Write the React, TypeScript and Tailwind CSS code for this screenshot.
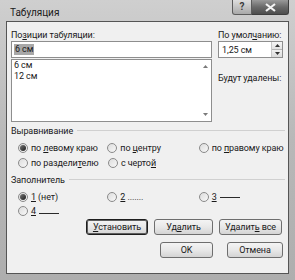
import React from "react";

const U = ({ children }: { children: React.ReactNode }) => (
  <span className="underline underline-offset-[1px]">{children}</span>
);

function Radio({ checked = false }: { checked?: boolean }) {
  return (
    <span className="relative inline-flex w-[10px] h-[10px] shrink-0 rounded-full border border-[#8a8a8a] bg-gradient-to-br from-[#dcdcdc] to-[#f8f8f8] items-center justify-center">
      {checked && (
        <span className="w-[6px] h-[6px] rounded-full bg-gradient-to-br from-[#7a7a7a] to-[#1e1e1e]" />
      )}
    </span>
  );
}

function RadioItem({
  checked,
  children,
  w,
}: {
  checked?: boolean;
  children: React.ReactNode;
  w: string;
}) {
  return (
    <div className={`flex items-center gap-[3px] ${w}`}>
      <Radio checked={checked} />
      <span className="whitespace-nowrap">{children}</span>
    </div>
  );
}

function Btn({
  children,
  w,
  def = false,
}: {
  children: React.ReactNode;
  w: string;
  def?: boolean;
}) {
  return (
    <div
      className={`${w} h-[16px] rounded-[3px] border ${
        def ? "border-[#1e1e1e] shadow-[inset_0_0_0_1px_#5e5e5e]" : "border-[#6e6e6e]"
      } bg-gradient-to-b from-[#f4f4f4] via-[#e8e8e8] to-[#d4d4d4] flex items-center justify-center whitespace-nowrap`}
    >
      {children}
    </div>
  );
}

export default function App() {
  return (
    <div
      className="w-[295px] h-[280px] overflow-hidden bg-gradient-to-b from-[#cfcfcf] via-[#b8b8b8] to-[#aeaeae] text-[9px] leading-[12px] tracking-[-0.1px] text-[#1a1a1a]"
      style={{ fontFamily: 'Roboto, "Noto Sans", sans-serif' }}
    >
      {/* Title bar */}
      <div className="h-[21px] flex items-start">
        <span className="pl-[10px] pt-[6px] text-[10px] leading-[13px] tracking-normal text-[#1a1a1a]">
          Табуляция
        </span>
        <div className="ml-auto mr-[6px] flex h-[15px]">
          <div className="w-[20px] h-[15px] rounded-bl-[3px] border border-[#5c5c5c] border-t-0 bg-gradient-to-b from-[#dedede] to-[#a9a9a9] flex items-center justify-center text-[10px] font-bold text-[#3a3a3a]">
            ?
          </div>
          <div className="w-[37px] h-[15px] rounded-br-[3px] border border-l-0 border-[#3e3e3e] border-t-0 bg-gradient-to-b from-[#9a9a9a] via-[#6a6a6a] to-[#4e4e4e] flex items-center justify-center">
            <svg width="11" height="9" viewBox="0 0 11 9">
              <path d="M1 1 L10 8 M10 1 L1 8" stroke="#f4f4f4" strokeWidth="2.2" />
            </svg>
          </div>
        </div>
      </div>

      {/* Client area */}
      <div className="mx-[6px] h-[253px] border border-[#555] bg-[#f0f0f0] flex flex-col">
        {/* Top section */}
        <div className="flex pl-[4px] pt-[6px]">
          <div className="w-[201px] flex flex-col">
            <div className="h-[13px] flex items-center">
              <span>
                По<U>з</U>иции табуляции:
              </span>
            </div>
            <div className="h-[17px] border border-[#8e8e8e] bg-white flex items-center pl-[2px]">
              <span className="bg-[#a8a8a8] px-[1px] leading-[11px]">6 см</span>
            </div>
            <div className="mt-[1px] h-[63px] border border-[#8e8e8e] bg-white flex">
              <div className="flex-1 pl-[2px] leading-[11px]">
                <div>6 см</div>
                <div>12 см</div>
              </div>
              <div className="w-[12px] flex flex-col justify-between items-center py-[5px]">
                <svg width="5" height="3" viewBox="0 0 5 3">
                  <path d="M0 3 L2.5 0 L5 3 Z" fill="#7a7a7a" />
                </svg>
                <svg width="5" height="3" viewBox="0 0 5 3">
                  <path d="M0 0 L2.5 3 L5 0 Z" fill="#7a7a7a" />
                </svg>
              </div>
            </div>
          </div>
          <div className="ml-[6px] w-[65px] flex flex-col">
            <div className="h-[13px] flex items-center whitespace-nowrap">
              <span>
                По умол<U>ч</U>анию:
              </span>
            </div>
            <div className="h-[17px] border border-[#8e8e8e] bg-white flex items-center">
              <span className="flex-1 pl-[3px]">1,25 см</span>
              <div className="w-[11px] h-full flex flex-col border-l border-[#c8c8c8]">
                <div className="flex-1 flex items-center justify-center bg-gradient-to-b from-[#f6f6f6] to-[#e2e2e2] border-b border-[#b4b4b4]">
                  <svg width="5" height="3" viewBox="0 0 5 3">
                    <path d="M0 3 L2.5 0 L5 3 Z" fill="#333" />
                  </svg>
                </div>
                <div className="flex-1 flex items-center justify-center bg-gradient-to-b from-[#f0f0f0] to-[#dcdcdc]">
                  <svg width="5" height="3" viewBox="0 0 5 3">
                    <path d="M0 0 L2.5 3 L5 0 Z" fill="#333" />
                  </svg>
                </div>
              </div>
            </div>
            <div className="mt-[13px] h-[13px] flex items-center whitespace-nowrap">
              Будут удалены:
            </div>
          </div>
        </div>

        {/* Alignment group */}
        <div className="mt-[2px] pl-[4px] pr-[3px] h-[13px] flex items-center">
          <span>Выравнивание</span>
          <div className="ml-[4px] flex-1 h-px bg-[#d0d0d0]" />
        </div>
        <div className="pl-[11px] mt-[3px] flex flex-col">
          <div className="h-[15px] flex items-center">
            <RadioItem checked w="w-[90px]">
              по <U>л</U>евому краю
            </RadioItem>
            <RadioItem w="w-[92px]">
              по <U>ц</U>ентру
            </RadioItem>
            <RadioItem w="w-[90px]">
              по <U>п</U>равому краю
            </RadioItem>
          </div>
          <div className="h-[15px] flex items-center">
            <RadioItem w="w-[90px]">
              по раздели<U>т</U>елю
            </RadioItem>
            <RadioItem w="w-[92px]">
              с черто<U>й</U>
            </RadioItem>
          </div>
        </div>

        {/* Leader group */}
        <div className="mt-[3px] pl-[4px] pr-[3px] h-[13px] flex items-center">
          <span>Заполнитель</span>
          <div className="ml-[4px] flex-1 h-px bg-[#d0d0d0]" />
        </div>
        <div className="pl-[11px] mt-[3px] flex flex-col">
          <div className="h-[15px] flex items-center">
            <RadioItem checked w="w-[90px]">
              <U>1</U> (нет)
            </RadioItem>
            <RadioItem w="w-[92px]">
              <U>2</U> .......
            </RadioItem>
            <RadioItem w="w-[90px]">
              <U>3</U>
              <span className="inline-block align-middle ml-[3px] w-[20px] h-px bg-[#2a2a2a]" />
            </RadioItem>
          </div>
          <div className="h-[14px] flex items-center">
            <RadioItem w="w-[90px]">
              <U>4</U>
              <span className="inline-block align-baseline ml-[3px] w-[20px] h-px bg-[#2a2a2a]" />
            </RadioItem>
          </div>
        </div>

        {/* Buttons */}
        <div className="mt-[1px] flex pl-[79px] gap-[6px]">
          <Btn w="w-[62px]" def>
            <span>
              <U>У</U>становить
            </span>
          </Btn>
          <Btn w="w-[59px]">
            <span>
              Уд<U>а</U>лить
            </span>
          </Btn>
          <Btn w="w-[63px]">
            <span>
              Удалит<U>ь</U> все
            </span>
          </Btn>
        </div>
        <div className="mt-[7px] flex pl-[153px] gap-[14px]">
          <Btn w="w-[53px]">OK</Btn>
          <Btn w="w-[56px]">Отмена</Btn>
        </div>
      </div>
    </div>
  );
}
